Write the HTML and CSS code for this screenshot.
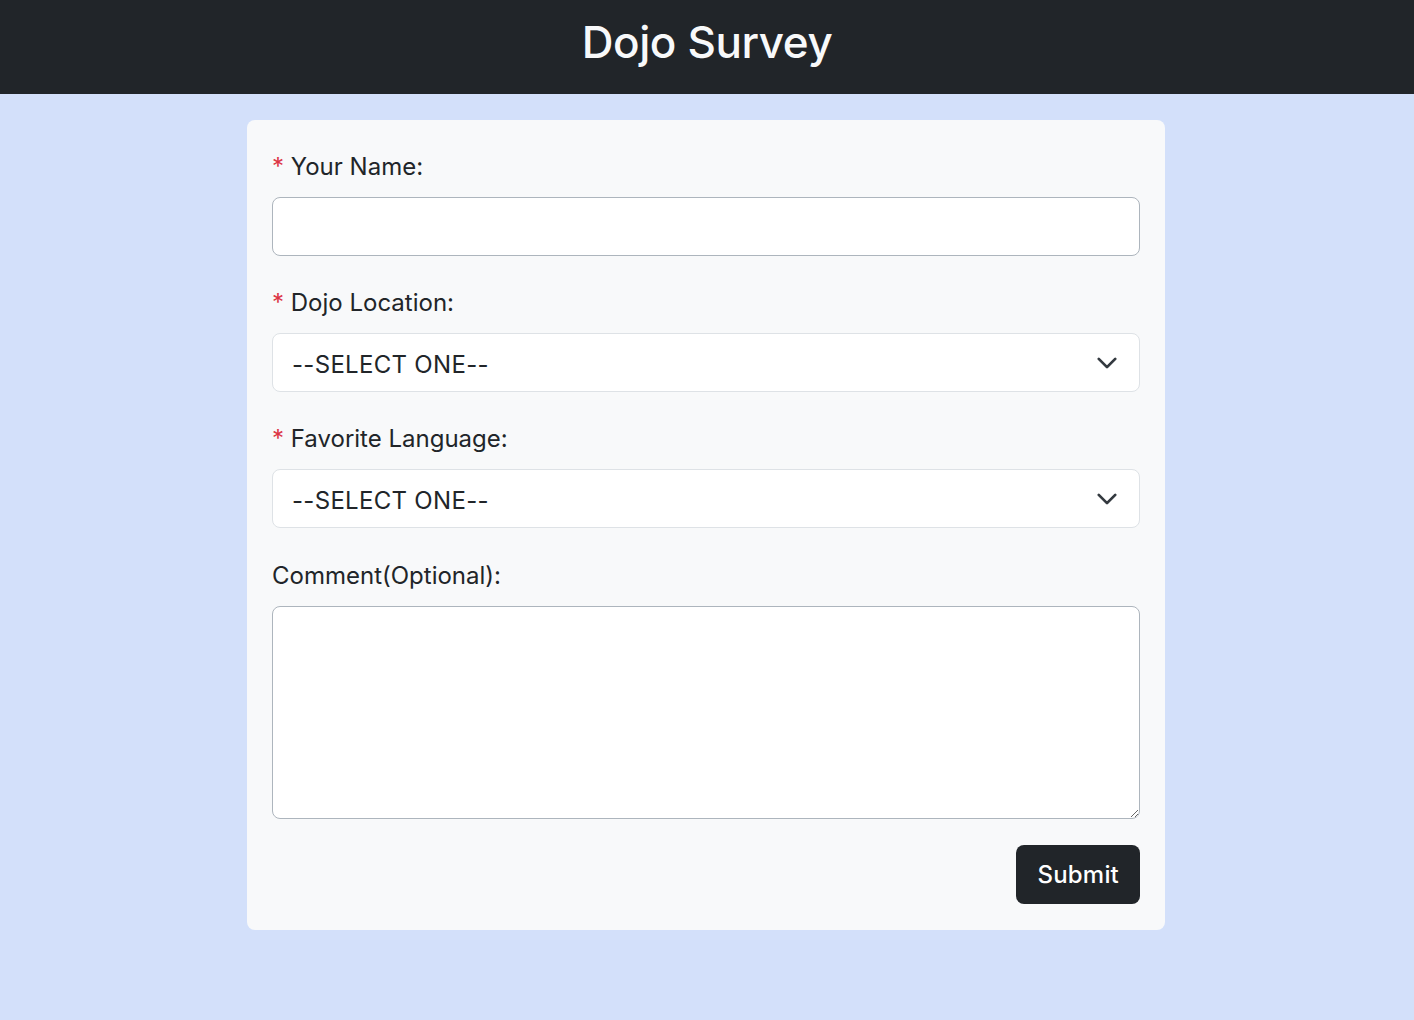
FILE: index.html
```html
<!DOCTYPE html>
<html lang="en">
<head>
<meta charset="utf-8">
<title>Dojo Survey</title>
<link rel="stylesheet" href="styles.css">
</head>
<body>
<header class="topbar">
  <h1 class="title">Dojo Survey</h1>
</header>
<main class="page">
  <form class="card">
    <div class="group">
      <label class="label" for="name"><span class="req">*</span> Your Name:</label>
      <input class="input" id="name" type="text">
    </div>
    <div class="group">
      <label class="label" for="loc"><span class="req">*</span> Dojo Location:</label>
      <select class="select" id="loc"><option>--SELECT ONE--</option></select>
    </div>
    <div class="group pre-last">
      <label class="label" for="lang"><span class="req">*</span> Favorite Language:</label>
      <select class="select" id="lang"><option>--SELECT ONE--</option></select>
    </div>
    <div class="group last">
      <label class="label" for="comment">Comment(Optional):</label>
      <textarea class="textarea" id="comment"></textarea>
    </div>
    <div class="actions">
      <button class="btn" type="button">Submit</button>
    </div>
  </form>
</main>
</body>
</html>
```
FILE: styles.css
```css
* { box-sizing: border-box; }
html, body { margin: 0; padding: 0; }
body {
  background: #d3e0fa;
  font-family: Inter, "Liberation Sans", Arial, sans-serif;
  color: #212529;
  min-height: 1020px;
}
.topbar {
  background: #212529;
  height: 94px;
  display: flex;
  align-items: center;
  justify-content: center;
  padding-bottom: 10px;
}
.title {
  margin: 0;
  color: #f8f9fa;
  font-size: 44px;
  font-weight: 500;
  letter-spacing: -0.4px;
  line-height: 1;
}
.page {
  display: flex;
  justify-content: center;
  padding-top: 26px;
  padding-right: 2px;
}
.card {
  width: 918px;
  background: #f8f9fa;
  border-radius: 8px;
  padding: 28px 25px 26px;
}
.group { margin-bottom: 28px; }
.group.pre-last { margin-bottom: 29px; }
.group.last { margin-bottom: 26px; }
.label {
  display: block;
  font-size: 24px;
  line-height: 36px;
  margin-bottom: 13px;
  padding-top: 1px;
  height: 36px;
}
.req { color: #dc3545; }
.input, .select, .textarea {
  display: block;
  width: 100%;
  font-family: inherit;
  font-size: 24px;
  color: #212529;
  background-color: #fff;
  border-radius: 8px;
  outline: none;
}
.input {
  height: 59px;
  border: 1px solid #adb5bd;
  padding: 0 20px;
}
.select {
  height: 59px;
  border: 1px solid #dee2e6;
  padding: 3px 60px 0 19px;
  letter-spacing: 0.3px;
  appearance: none;
  -webkit-appearance: none;
  background-image: url("data:image/svg+xml,%3csvg xmlns='http://www.w3.org/2000/svg' viewBox='0 0 16 16'%3e%3cpath fill='none' stroke='%23343a40' stroke-linecap='round' stroke-linejoin='round' stroke-width='2' d='m2 5 6 6 6-6'/%3e%3c/svg%3e");
  background-repeat: no-repeat;
  background-position: right 21px center;
  background-size: 22px 22px;
}
.textarea {
  height: 213px;
  border: 1px solid #adb5bd;
  padding: 10px 20px;
  resize: vertical;
}
.actions {
  display: flex;
  justify-content: flex-end;
}
.btn {
  height: 59px;
  padding: 0 21px;
  background: #212529;
  color: #fff;
  border: none;
  border-radius: 8px;
  font-family: inherit;
  font-size: 24px;
  font-weight: 500;
  letter-spacing: 0.2px;
}
```
